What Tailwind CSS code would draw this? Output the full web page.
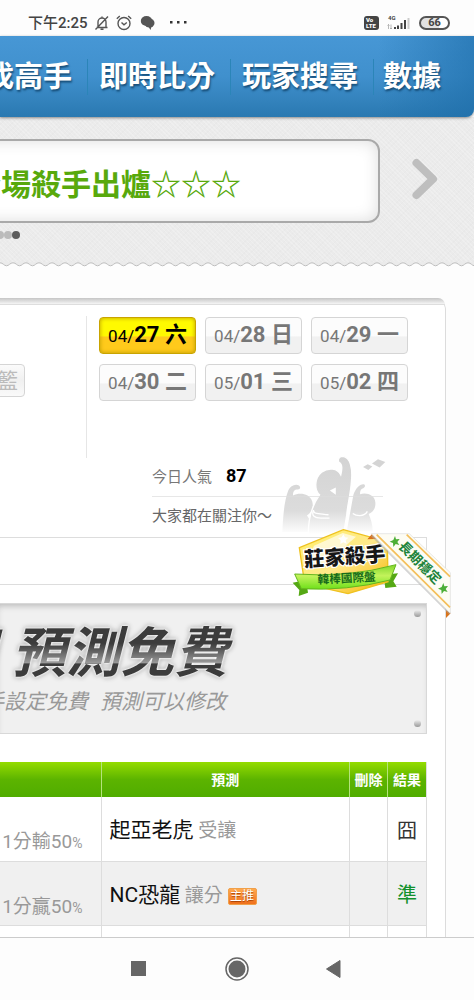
<!DOCTYPE html>
<html lang="zh-Hant">
<head>
    <meta charset="UTF-8">
    <meta name="viewport" content="width=device-width, initial-scale=1.0">
    <title>玩家預測</title>
    <script src="https://cdn.jsdelivr.net/npm/@tailwindcss/browser@4"></script>
    <style>
        body {
            font-family: Roboto, "Noto Sans CJK TC", sans-serif;
        }
        .texture {
            background-color: #ebebeb;
            background-image:
                repeating-linear-gradient(45deg, rgba(255, 255, 255, 0.2) 0 1px, transparent 1px 3px),
                repeating-linear-gradient(-45deg, rgba(0, 0, 0, 0.01) 0 1px, transparent 1px 4px);
        }
        .headline {
            filter: drop-shadow(0 0 1px #fff) drop-shadow(0 0 1px #fff) drop-shadow(0 0 2px #999);
        }
    </style>
</head>
<body class="bg-[#fdfdfd] min-h-screen flex flex-col overflow-x-hidden">
    <!-- Status bar -->
    <div class="h-9 shrink-0 flex items-center pl-7 pr-6 pt-2.5 text-[#444]">
        <span class="text-[15px] leading-5 font-medium">下午2:25</span>
        <svg class="ml-1.5 w-4 h-4" viewBox="0 0 16 16" fill="none" stroke="#555" stroke-width="1.4">
            <path d="M2.5 12.5h11M4 12V7a4 4 0 0 1 8 0v5M8 1.5V3M6.5 14.2h3M1.5 14.5L14 1.5"/>
        </svg>
        <svg class="ml-1.5 w-4 h-4" viewBox="0 0 16 16" fill="none" stroke="#555" stroke-width="1.4">
            <circle cx="8" cy="8.5" r="6"/>
            <path d="M5.5 7.5L8 9.8l2.8-2.3M.8 3.8l3-2.8M15.2 3.8l-3-2.8"/>
        </svg>
        <svg class="ml-2 w-4 h-4" viewBox="0 0 16 16" fill="#555">
            <ellipse cx="6.5" cy="6" rx="5.7" ry="5"/>
            <ellipse cx="9.5" cy="8" rx="5" ry="4.5"/>
            <path d="M8 11l2.500 4 1-3.500z"/>
        </svg>
        <svg class="ml-3 w-5 h-4" viewBox="0 0 20 16" fill="#333">
            <path d="M2 6h2.500v2.500H2zM9 6h2.500v2.500H9zM16 6h2.500v2.500H16z"/>
        </svg>
        <span class="ml-auto w-[15px] h-3.5 rounded-[3px] bg-[#444] text-white text-[6px] leading-[6px] font-black flex flex-col justify-center pl-0.5"><span>Vo</span><span>LTE</span></span>
        <svg class="ml-2 w-6 h-4" viewBox="0 0 24 16" fill="#444">
            <text x="1" y="5" font-size="6" font-weight="700">4G</text>
            <path d="M7 12h2v2H7zM10 10.500h2V14h-2zM13.500 8h2v6h-2zM17 5h2v9h-2z"/>
            <path d="M20.500 3h2v11h-2z" fill="#ccc"/>
            <path d="M1.500 14V9.500M4 9.500V14M.5 10.500l1-1 1 1M3 13l1 1 1-1" fill="none" stroke="#999" stroke-width=".7"/>
        </svg>
        <span class="ml-2 w-[31px] h-3.5 rounded-full border-2 border-[#555] text-[11px] leading-[10px] font-bold text-center bg-linear-to-r from-[#e2e2e2] from-65% to-white to-65%">66</span>
    </div>

    <!-- Main navigation -->
    <nav class="relative z-10 h-[81px] shrink-0 flex items-center justify-end overflow-hidden pr-[23px] rounded-br-lg bg-linear-to-b from-[#4797d5] via-[#4090cd] to-[#2a79b1] shadow-[0_1px_3px_#888] text-[29px] leading-9 font-bold text-white text-shadow-[1px_2px_2px_#174f7a]">
        <div class="absolute inset-y-0 right-0 w-24 bg-linear-to-r from-transparent to-[#1c6ca8]/60"></div>
        <a href="#" class="relative shrink-0 pr-[15px]">找高手</a>
        <a href="#" class="relative shrink-0 border-l border-[#2b85b8] pl-[11px] pr-[15px]">即時比分</a>
        <a href="#" class="relative shrink-0 border-l border-[#2b85b8] pl-[11px] pr-[15px]">玩家搜尋</a>
        <a href="#" class="relative shrink-0 border-l border-[#2b85b8] pl-[9px] pr-2.5">數據</a>
    </nav>

    <!-- Announcement slider -->
    <section class="texture relative h-[145px] shrink-0 pt-[22px]">
        <div class="flex items-center">
            <div class="-ml-8 w-[412px] h-[84px] rounded-xl border-2 border-[#a9a9a9] bg-white shadow-[inset_0_0_16px_#ddd] flex items-center pl-px pt-2">
                <p class="text-[30px] leading-10 font-bold text-[#58a90c] whitespace-nowrap">全場殺手出爐☆☆☆</p>
            </div>
            <button class="ml-7 p-1 pb-2" aria-label="下一則">
                <svg class="w-8 h-12" viewBox="0 0 32 48" fill="none" stroke="#bebebe" stroke-width="8" stroke-linecap="round" stroke-linejoin="round">
                    <path d="M4.500 8l16.500 16L4.500 40"/>
                </svg>
            </button>
        </div>
        <div class="flex -ml-1 mt-2">
            <span class="size-2 rounded-full bg-[#bbb]"></span>
            <span class="size-2 rounded-full bg-[#bbb]"></span>
            <span class="size-2 rounded-full bg-[#5c5c5c]"></span>
        </div>
    </section>
    <svg class="w-full h-[5px] shrink-0 block" aria-hidden="true">
        <defs>
            <pattern id="wave" width="13" height="5" patternUnits="userSpaceOnUse">
                <path d="M0 0H13V.8C10 .8 9 3.800 6.500 3.800S3 .8 0 .8z" fill="#ebebeb"/>
                <path d="M0 .8C3 .8 4 3.800 6.500 3.800S10 .8 13 .8" fill="none" stroke="#bdbdbd"/>
            </pattern>
        </defs>
        <rect width="100%" height="5" fill="url(#wave)"/>
    </svg>

    <!-- Player panel -->
    <main class="mt-[31px] mr-7 flex-1 rounded-tr-xl border-r border-[#dcdcdc] bg-white">
        <div class="h-[7px] rounded-tr-xl bg-linear-to-b from-[#c6c6c6] to-[#f5f5f5] border-b border-[#dedede]"></div>

        <section class="relative flex h-[232px] pt-[11px]">
            <div class="w-[87px] h-[142px] shrink-0 border-r border-[#e6e6e6] pt-12">
                <button class="-ml-9 w-[61px] h-[33px] border border-[#d5d5d5] rounded bg-linear-to-b from-[#fbfbfb] via-[#f0f0f0] to-[#fafafa] text-[21px] leading-7 text-[#bbb] text-right pr-1.5">籃</button>
            </div>
            <div class="pl-3">
                <div class="grid grid-cols-[97px_97px_97px] gap-x-[9px] gap-y-2.5 pt-px text-[17px] text-[#777]">
                    <button class="h-[37px] rounded border border-[#c9a400] bg-linear-to-b from-[#fffa00] from-50% to-[#ffca1b] to-55% shadow-[inset_0_0_4px_#b89a00] text-black whitespace-nowrap leading-8">04/<b class="text-[22px]">27 六</b></button>
                    <button class="h-[37px] rounded border border-[#d5d5d5] bg-linear-to-b from-[#fcfcfc] from-50% to-[#f1f1f1] to-55% whitespace-nowrap leading-8">04/<b class="text-[22px]">28 日</b></button>
                    <button class="h-[37px] rounded border border-[#d5d5d5] bg-linear-to-b from-[#fcfcfc] from-50% to-[#f1f1f1] to-55% whitespace-nowrap leading-8">04/<b class="text-[22px]">29 一</b></button>
                    <button class="h-[37px] rounded border border-[#d5d5d5] bg-linear-to-b from-[#fcfcfc] from-50% to-[#f1f1f1] to-55% whitespace-nowrap leading-8">04/<b class="text-[22px]">30 二</b></button>
                    <button class="h-[37px] rounded border border-[#d5d5d5] bg-linear-to-b from-[#fcfcfc] from-50% to-[#f1f1f1] to-55% whitespace-nowrap leading-8">05/<b class="text-[22px]">01 三</b></button>
                    <button class="h-[37px] rounded border border-[#d5d5d5] bg-linear-to-b from-[#fcfcfc] from-50% to-[#f1f1f1] to-55% whitespace-nowrap leading-8">05/<b class="text-[22px]">02 四</b></button>
                </div>
                <div class="relative ml-[53px] mt-14 w-[231px] text-[15px] leading-[38px] text-[#777]">
                    <!-- Cheering crowd -->
                    <svg class="absolute left-[123px] -top-1 w-[113px] h-[83px]" viewBox="400 40 340 250">
                        <defs>
                            <linearGradient id="crowd" x1="0" y1="50" x2="0" y2="285" gradientUnits="userSpaceOnUse">
                                <stop offset="0" stop-color="#d3d3d3"/>
                                <stop offset=".7" stop-color="#dcdcdc"/>
                                <stop offset="1" stop-color="#fff"/>
                            </linearGradient>
                        </defs>
                        <g fill="url(#crowd)">
                            <path d="M440 152c6-12 20-20 32-14 6 4 4 12-4 12-10 0-14 6-14 18 20-10 50-6 58 18 5 18-2 34-16 42 8 12 18 28 18 50h-92c2-40 4-90 18-126z"/>
                            <path d="M636 166c6-20 20-34 32-32 6 4 2 12-6 14-6 4-6 10-6 16 20-6 44 2 46 24 2 20-8 30-20 36 6 14 12 30 12 52h-78z"/>
                            <path stroke="#fff" stroke-width="4" d="M592 68c-4-10 2-18 12-18 24 2 30 40 26 76-2 36-12 70-14 100l-10 60H500c0-40 8-84 34-120-16-14-16-50 6-68 22-16 48-12 58 8 4-16 6-34-6-38z"/>
                            <path d="M665 82l14-8 14 7-12 10zM692 72l18-13 22 8-17 17z"/>
                        </g>
                        <path d="M516 212c-8 18 4 24 22 24h26M516 212c-2 12 20 12 45 14M634 222c10 8 34 12 44-6" fill="none" stroke="#fff" stroke-width="4"/>
                        <path d="M565 153l18-9v22z" fill="#fff"/>
                    </svg>
                    <p class="relative border-b border-[#ddd]/70">今日人氣<b class="ml-3.5 text-[18px] text-black">87</b></p>
                    <p class="relative text-[#666]">大家都在關注你～</p>
                </div>
            </div>
        </section>

        <div class="relative mr-[18px] h-12 border-y border-r border-[#ddd]">
            <!-- Killer badge and ribbon -->
            <svg class="absolute z-10 -right-7 -top-3 w-[164px] h-[94px]" viewBox="448 256 492 282">
                <defs>
                    <linearGradient id="gold" x1="0" y1="0" x2="1" y2="1">
                        <stop offset="0" stop-color="#fff06a"/>
                        <stop offset=".5" stop-color="#ffe98a"/>
                        <stop offset="1" stop-color="#f5b400"/>
                    </linearGradient>
                    <linearGradient id="lime" x1="0" y1="0" x2="0" y2="1">
                        <stop offset="0" stop-color="#7fd62c"/>
                        <stop offset=".45" stop-color="#c3f35b"/>
                        <stop offset="1" stop-color="#6ee01a"/>
                    </linearGradient>
                </defs>
                <path d="M456 426l40-8 6 38-28 10 2-18zM772 398l-44 4 6 40 34-4-10-16z" fill="#55a814"/>
                <path d="M608 267l132 36 2 120-120 36-130-30-16-108z" fill="url(#gold)" stroke="#efc220" stroke-width="4"/>
                <path d="M520 315l86-38 40 11-100 87h-52z" fill="#fff" opacity=".65"/>
                <path d="M608 281l5 9 10 1-8 8 3 10-10-4-9 5 1-11-8-7 11-2z" fill="#fff"/>
                <path d="M462 400q160 12 304-28l-18 46q-130 34-266 26z" fill="url(#lime)" stroke="#65b61e" stroke-width="3"/>
                <g transform="rotate(-4 612 348)">
                    <text x="612" y="370" text-anchor="middle" font-size="61" font-weight="900" fill="#161616" stroke="#fff" stroke-width="7" paint-order="stroke">莊家殺手</text>
                </g>
                <g transform="rotate(-3 618 410)">
                    <text x="618" y="425" text-anchor="middle" font-size="35" font-weight="700" fill="#176b1b">韓棒國際盤</text>
                </g>
                <path d="M680 296l14-16 28 14zM916 508l14 10-14 14z" fill="#d9731a"/>
                <path d="M694 284l234 234" stroke="#aaa" stroke-width="8" opacity=".5"/>
                <path d="M692 279H806L929 396V518z" fill="#fdfcf3" stroke="#ddd" stroke-width="2"/>
                <path d="M708 282L928 500M798 282L928 408" stroke="#f4bf5a" stroke-width="5"/>
                <path d="M763 286l3 10 11-1-7 9 6 9-11-3-7 9-1-12-10-4 11-5zM908 427l3 10 11-1-7 9 6 9-11-3-7 9-1-12-10-4 11-5z" fill="#4cae36"/>
                <g transform="rotate(45 838 366)">
                    <text x="838" y="380" text-anchor="middle" font-size="40" font-weight="700" fill="#20833a">長期穩定</text>
                </g>
            </svg>
        </div>

        <!-- Promo board -->
        <section class="relative mt-[18px] mr-[18px] h-[131px] overflow-hidden border-y border-r border-[#d8d8d8] bg-[#f0f0f0] shadow-[inset_0_5px_6px_-3px_#bbb]">
            <div class="headline -ml-[116px] mt-3.5 w-[360px]">
                <p class="w-full pl-2 bg-linear-to-b from-[#3c3c3c] from-35% via-[#999] via-62% to-[#3c3c3c] to-64% bg-clip-text text-transparent text-[54px] leading-[72px] font-bold italic whitespace-nowrap">每日<span class="ml-3">預測免費</span></p>
            </div>
            <p class="-ml-[38px] text-[21px] leading-6 italic text-[#999] whitespace-nowrap">新手設定免費<span class="ml-3">預測可以修改</span></p>
            <span class="absolute right-[5px] top-1.5 size-[7px] rounded-full bg-linear-to-b from-[#eee] to-[#999]"></span>
            <span class="absolute right-[5px] bottom-1.5 size-[7px] rounded-full bg-linear-to-b from-[#eee] to-[#999]"></span>
        </section>

        <!-- Prediction table -->
        <div class="mt-7 mr-[18px]">
            <table class="w-full table-fixed border-r border-[#ddd] text-[#999]">
                <colgroup>
                    <col class="w-[101px]">
                    <col>
                    <col class="w-[38px]">
                    <col class="w-[39px]">
                </colgroup>
                <thead>
                    <tr class="h-[35px] bg-linear-to-b from-[#94dc00] via-[#5cb400] to-[#50ac00] text-[14px] leading-5 text-white">
                        <th></th>
                        <th class="border-l border-[#b5e37c]">預測</th>
                        <th class="border-l border-[#b5e37c]">刪除</th>
                        <th class="border-l border-[#b5e37c]">結果</th>
                    </tr>
                </thead>
                <tbody>
                    <tr class="h-16 bg-white border-b border-[#ddd]">
                        <td class="pt-7 pr-[18px] text-right text-[19px] leading-6 whitespace-nowrap">1分輸50<span class="text-[14px]">%</span></td>
                        <td class="border-l border-[#ddd] pl-2 pt-1 text-[19px] leading-7"><span class="text-[21px] text-[#111]">起亞老虎</span> 受讓</td>
                        <td class="border-l border-[#ddd]"></td>
                        <td class="border-l border-[#ddd] pt-1 text-center text-[20px] text-[#333]">囧</td>
                    </tr>
                    <tr class="h-16 bg-[#f0f0f0] border-b border-[#ddd]">
                        <td class="pt-7 pr-[18px] text-right text-[19px] leading-6 whitespace-nowrap">1分贏50<span class="text-[14px]">%</span></td>
                        <td class="border-l border-[#ddd] pl-2 pt-1 text-[19px] leading-7"><span class="text-[21px] text-[#111]">NC恐龍</span> 讓分 <span class="inline-block align-middle w-[29px] h-[17px] rounded-xs border border-[#f0a04a] bg-linear-to-b from-[#ffa94d] to-[#f0701a] text-center text-[12px] leading-[15px] text-white text-shadow-[0_1px_1px_#a33c00]">主推</span></td>
                        <td class="border-l border-[#ddd]"></td>
                        <td class="border-l border-[#ddd] pt-1 text-center text-[20px] text-[#11902c]">準</td>
                    </tr>
                    <tr class="h-3 bg-white">
                        <td></td>
                        <td class="border-l border-[#ddd]"></td>
                        <td class="border-l border-[#ddd]"></td>
                        <td class="border-l border-[#ddd]"></td>
                    </tr>
                </tbody>
            </table>
        </div>
    </main>

    <!-- System navigation -->
    <footer class="h-[63px] shrink-0 border-t border-[#ccc] bg-[#fdfdfd] flex items-center justify-center gap-[73px]">
        <button aria-label="最近使用"><svg class="size-6" viewBox="0 0 24 24"><path d="M3 4h15v15H3z" fill="#666"/></svg></button>
        <button aria-label="首頁"><svg class="size-6" viewBox="0 0 24 24"><circle cx="12" cy="12" r="11" fill="none" stroke="#666" stroke-width="1.500"/><circle cx="12" cy="12" r="8.500" fill="#666"/></svg></button>
        <button aria-label="返回"><svg class="size-6" viewBox="0 0 24 24"><path d="M4.500 12L18 3.500v17z" fill="#666" stroke="#666" stroke-linejoin="round"/></svg></button>
    </footer>
</body>
</html>
